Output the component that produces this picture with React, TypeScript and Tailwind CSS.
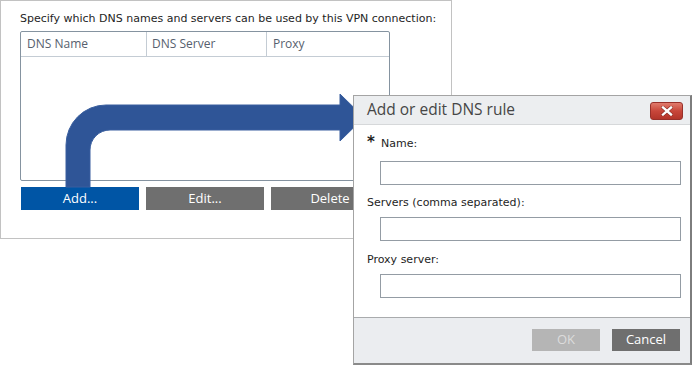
import React from 'react';

const body = { fontFamily: '"DejaVu Sans", Verdana, sans-serif' };
const ui = { fontFamily: '"Open Sans", "Noto Sans", sans-serif' };

function Field({ label, required, className }: { label: string; required?: boolean; className: string }) {
  return (
    <div className={className}>
      <div className="flex items-center h-4 text-[11px] text-[#1e1e1e] pl-[13px]" style={body}>
        {required ? (
          <>
            <span className="w-[14px] text-[15px] font-bold leading-none -mt-1">*</span>
            <span>{label}</span>
          </>
        ) : (
          <span>{label}</span>
        )}
      </div>
    </div>
  );
}

function TextBox({ className }: { className: string }) {
  return <div className={`ml-[26px] w-[301px] h-[24px] bg-white border border-[#949ca4] ${className}`} />;
}

export default function App() {
  return (
    <div className="relative w-[695px] h-[366px] bg-white overflow-hidden">
      {/* VPN settings panel */}
      <div className="w-[452px] h-[239px] border border-[#c2c2c2] pt-[10px] pl-[19px]">
        <p className="text-[11px] leading-4 text-[#1e1e1e]" style={body}>
          Specify which DNS names and servers can be used by this VPN connection:
        </p>
        <div className="mt-[4px] w-[370px] h-[150px] border border-[#8593a0] rounded-[2px]">
          <div className="flex h-[25px] border-b border-[#c4ccd4] text-[12px] text-[#56606e]" style={ui}>
            <div className="w-[126px] pl-[6px] flex items-center border-r border-[#c4ccd4]">DNS Name</div>
            <div className="w-[120px] pl-[5px] flex items-center border-r border-[#c4ccd4]">DNS Server</div>
            <div className="flex-1 pl-[6px] flex items-center">Proxy</div>
          </div>
        </div>
        <div className="mt-[6px] ml-px flex gap-[7px] text-[13px] text-white" style={ui}>
          <button className="w-[118px] h-[23px] bg-[#0055a5]">Add...</button>
          <button className="w-[118px] h-[23px] bg-[#6f6f6f]">Edit...</button>
          <button className="w-[118px] h-[23px] bg-[#6f6f6f]">Delete</button>
        </div>
      </div>

      {/* arrow */}
      <svg className="absolute left-0 top-0" width="695" height="366" viewBox="0 0 695 366">
        <path
          d="M66 187 L66 145 A40 40 0 0 1 106 105 L340 105 L340 94 L364 117.5 L340 141 L340 130 L110 130 A20 20 0 0 0 90 150 L90 187 Z"
          fill="#2f5597"
          stroke="#3a5f9f"
          strokeWidth="1"
        />
      </svg>

      {/* dialog */}
      <div className="absolute left-[353px] top-[95px] w-[339px] h-[270px] flex flex-col bg-white border border-[#a4a4a4] border-r-2 border-b-2 border-r-[#7d7d7d] border-b-[#8a8a8a]">
        <div className="h-[29px] shrink-0 flex items-center justify-between bg-[#eceef0] border-b border-[#d6d8da] pl-[13px] pr-[7px]">
          <span className="text-[15.5px] text-[#464646] leading-none" style={ui}>Add or edit DNS rule</span>
          <button className="w-[33px] h-[18px] mt-[2px] rounded-[3px] border border-[#98302a] bg-gradient-to-b from-[#e07a6c] via-[#c8463a] to-[#b3352a] flex items-center justify-center">
            <svg width="12" height="10" viewBox="0 0 12 10">
              <path d="M2 1.5 L10 8.5 M10 1.5 L2 8.5" stroke="#7a2018" strokeWidth="3.4" strokeLinecap="square" />
              <path d="M2 1.5 L10 8.5 M10 1.5 L2 8.5" stroke="#ffffff" strokeWidth="2.4" strokeLinecap="square" />
            </svg>
          </button>
        </div>
        <div className="flex-1">
          <Field label="Name:" required className="mt-[11px]" />
          <TextBox className="mt-[9px]" />
          <Field label="Servers (comma separated):" className="mt-[10px]" />
          <TextBox className="mt-[6px]" />
          <Field label="Proxy server:" className="mt-[11px]" />
          <TextBox className="mt-[6px]" />
        </div>
        <div className="h-[46px] shrink-0 bg-[#ebedf0] border-t border-[#a9abad] flex items-start justify-end gap-[12px] pt-[11px] pr-[10px] text-[13px]" style={ui}>
          <button className="w-[68px] h-[22px] bg-[#b5b5b5] text-[#dcdcdc]">OK</button>
          <button className="w-[68px] h-[22px] bg-[#6f6f6f] text-white">Cancel</button>
        </div>
      </div>
    </div>
  );
}
